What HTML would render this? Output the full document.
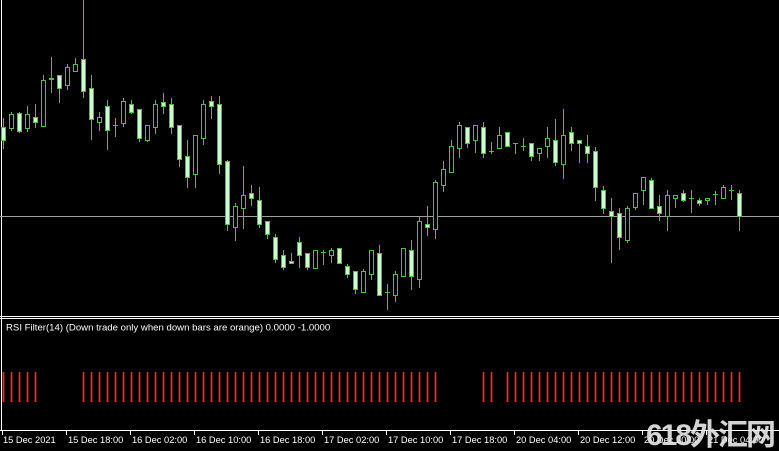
<!DOCTYPE html>
<html><head><meta charset="utf-8"><style>
html,body{margin:0;padding:0;background:#000;width:779px;height:451px;overflow:hidden}
svg{display:block}
text{font-family:"Liberation Sans",sans-serif;font-size:9.3px;fill:#fff}
</style></head><body>
<svg id="s" width="779" height="451" xmlns="http://www.w3.org/2000/svg" shape-rendering="crispEdges">
<rect width="779" height="451" fill="#000"/>
<line x1="1.5" y1="0" x2="1.5" y2="430" stroke="#fff"/>
<line x1="0" y1="216.5" x2="779" y2="216.5" stroke="#a0a0a0"/>
<line x1="0" y1="316.5" x2="779" y2="316.5" stroke="#fff"/>
<line x1="0" y1="318.5" x2="779" y2="318.5" stroke="#fff"/>
<line x1="0" y1="430.5" x2="779" y2="430.5" stroke="#fff"/>
<text x="6" y="330.5" style="font-size:9.6px">RSI Filter(14)  (Down trade only when down bars are orange) 0.0000 -1.0000</text>
<g id="c"></g>
<g id="ax"></g>
<text x="646" y="445" style="font-family:'Liberation Sans','Noto Sans CJK SC',sans-serif;font-size:30px;font-weight:bold;fill:#e6e6e6;opacity:0.92;letter-spacing:-2px">618外汇网</text>
</svg>
<script>
var d=[[127,140,118,148,1],[114,128,112,130,0],[113,131,112,132,1],[114,128,106,131,0],[117,122,104,127,1],[80,126,75,126,0],[78,79,57,92,0],[75,88,75,102,1],[67,85,64,89,0],[64,71,58,71,0],[59,91,0,97,1],[88,119,75,139,1],[117,122,112,130,0],[106,130,100,149,1],[125,125,118,136,0],[101,123,98,126,0],[104,112,100,113,1],[109,138,109,141,1],[125,140,125,141,0],[104,127,100,133,0],[102,106,93,113,1],[104,127,98,133,1],[125,159,125,166,1],[156,177,140,187,1],[135,174,135,187,0],[104,138,100,144,0],[101,106,96,118,1],[104,164,96,173,1],[161,224,160,230,1],[206,227,203,240,0],[195,208,166,228,0],[193,198,185,205,1],[200,224,187,227,1],[221,234,221,238,1],[237,259,234,262,1],[255,267,250,269,1],[261,263,253,263,1],[242,255,237,267,1],[253,267,253,269,1],[250,268,250,268,0],[252,252,250,264,0],[250,255,248,262,0],[248,263,248,263,1],[266,274,264,277,1],[271,289,271,293,1],[271,292,269,292,0],[250,274,250,279,0],[253,295,245,295,1],[292,292,284,309,0],[274,295,271,301,0],[248,276,248,276,0],[250,276,240,289,1],[221,279,216,287,0],[224,227,206,235,1],[182,229,180,238,0],[169,185,161,191,0],[146,172,140,172,0],[125,148,122,157,0],[127,143,127,147,1],[125,140,125,152,0],[127,153,122,157,1],[151,151,142,153,0],[135,148,127,148,0],[132,146,132,146,1],[143,143,143,153,0],[146,146,138,150,0],[143,156,143,160,1],[148,153,148,160,0],[138,146,127,157,0],[140,162,119,165,1],[135,164,109,178,0],[132,143,127,150,1],[140,143,140,162,1],[146,153,135,162,1],[151,187,147,200,1],[190,208,186,213,1],[211,216,198,262,1],[213,237,208,249,1],[208,240,206,242,0],[193,207,193,209,0],[177,190,177,204,0],[180,208,178,208,1],[206,213,195,220,1],[195,216,190,230,0],[195,198,195,207,0],[193,200,190,201,1],[198,198,190,212,0],[200,203,198,205,1],[198,200,198,204,0],[194,194,191,204,0],[187,198,185,198,0],[190,190,185,199,0],[193,216,190,230,1]];
var h='',G='#3ccc3c',F='#c8ffc8';
for(var k=0;k<d.length;k++){var c=d[k],x=3+8*k,cx=x+0.5;
h+='<line x1="'+cx+'" y1="'+c[2]+'" x2="'+cx+'" y2="'+(c[3]+1)+'" stroke="'+G+'"/>';
if(c[1]-c[0]<1){h+='<line x1="'+(x-2)+'" y1="'+(c[0]+0.5)+'" x2="'+(x+3)+'" y2="'+(c[0]+0.5)+'" stroke="'+G+'"/>';}
else h+='<rect x="'+(x-1.5)+'" y="'+(c[0]+0.5)+'" width="4" height="'+(c[1]-c[0])+'" fill="'+(c[4]?F:'#000')+'" stroke="'+G+'"/>';
var r=(k<=4)||(k>=10&&k<=54)||(k==60||k==61)||(k>=63);
if(r){h+='<rect x="'+(x-1)+'" y="372" width="3" height="30" fill="#5a1208"/>';
h+='<rect x="'+x+'" y="372" width="1" height="30" fill="#ff2a10"/>';}}
document.getElementById('c').innerHTML=h;
var L=['15 Dec 2021','15 Dec 18:00','16 Dec 02:00','16 Dec 10:00','16 Dec 18:00','17 Dec 02:00','17 Dec 10:00','17 Dec 18:00','20 Dec 04:00','20 Dec 12:00','20 Dec 20:00','21 Dec 04:00'];
var a='';for(var i=0;i<L.length;i++){var tx=2+64*i;
a+='<line x1="'+(tx+0.5)+'" y1="430" x2="'+(tx+0.5)+'" y2="435" stroke="#fff"/>';
a+='<text x="'+(tx+(i?2:1))+'" y="443">'+L[i]+'</text>';}
document.getElementById('ax').innerHTML=a;
</script>
</body></html>
